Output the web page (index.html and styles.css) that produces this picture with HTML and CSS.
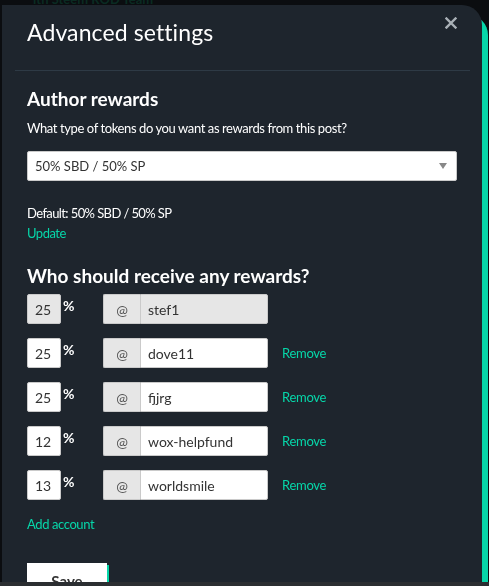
FILE: index.html
```html
<!DOCTYPE html>
<html lang="en">
<head>
<meta charset="utf-8">
<title>Advanced settings</title>
<link rel="stylesheet" href="styles.css">
</head>
<body>
<div class="page">
  <p class="page-line">ith Steem ROD Team</p>
</div>
<div class="overlay">
  <div class="modal">
    <div class="modal-header">
      <h3 class="modal-title">Advanced settings</h3>
      <button class="close" aria-label="Close">
        <svg width="12" height="12" viewBox="0 0 12 12"><path d="M1.5 1.5 L10.5 10.5 M10.5 1.5 L1.5 10.5" stroke="#a9b0b6" stroke-width="2.4" stroke-linecap="square"/></svg>
      </button>
    </div>
    <hr class="sep">
    <h4 class="section-title">Author rewards</h4>
    <p class="text q">What type of tokens do you want as rewards from this post?</p>
    <div class="select">
      <span>50% SBD / 50% SP</span>
      <span class="caret"></span>
    </div>
    <p class="text default">Default: 50% SBD / 50% SP</p>
    <a class="link update">Update</a>
    <h4 class="section-title who">Who should receive any rewards?</h4>
    <div class="rows">
      <div class="row">
        <div class="pct"><span class="input small disabled">25</span><span class="pct-sign">%</span></div>
        <div class="group"><span class="addon">@</span><span class="input name disabled">stef1</span></div>
      </div>
      <div class="row">
        <div class="pct"><span class="input small">25</span><span class="pct-sign">%</span></div>
        <div class="group"><span class="addon">@</span><span class="input name">dove11</span></div>
        <a class="link remove">Remove</a>
      </div>
      <div class="row">
        <div class="pct"><span class="input small">25</span><span class="pct-sign">%</span></div>
        <div class="group"><span class="addon">@</span><span class="input name">fjjrg</span></div>
        <a class="link remove">Remove</a>
      </div>
      <div class="row">
        <div class="pct"><span class="input small">12</span><span class="pct-sign">%</span></div>
        <div class="group"><span class="addon">@</span><span class="input name">wox-helpfund</span></div>
        <a class="link remove">Remove</a>
      </div>
      <div class="row">
        <div class="pct"><span class="input small">13</span><span class="pct-sign">%</span></div>
        <div class="group"><span class="addon">@</span><span class="input name">worldsmile</span></div>
        <a class="link remove">Remove</a>
      </div>
    </div>
    <a class="link add">Add account</a>
    <button class="save">Save</button>
  </div>
</div>
<div class="hbar"></div>
</body>
</html>
```
FILE: styles.css
```css
* { box-sizing: border-box; }
html, body { margin: 0; padding: 0; }
body {
  background: #0b0d10;
  font-family: Lato, "Noto Sans", sans-serif;
  color: #fff;
  height: 586px;
  overflow: hidden;
}
.page { padding-left: 33px; }
.page-line {
  margin: -8px 0 0;
  font-size: 13px;
  line-height: 14px;
  color: #0a2b22;
  font-weight: 700;
}
.overlay {
  position: fixed;
  inset: 0;
  padding: 5px 0 0 2px;
  overflow: hidden;
}
.modal {
  width: 480px;
  min-height: 700px;
  background: #1e252d;
  border-radius: 0 20px 0 0;
  box-shadow: 6px 10px 0 #06d6a9;
  padding: 12px 25px 0;
}
.modal-header {
  display: flex;
  justify-content: space-between;
  align-items: flex-start;
}
.modal-title {
  margin: 0;
  font-size: 23px;
  line-height: 30px;
  font-weight: 400;
  letter-spacing: 0.1px;
}
.close {
  background: none;
  border: 0;
  padding: 0;
  margin-top: 0;
  width: 12px;
  height: 12px;
  display: block;
  cursor: pointer;
}
.close svg { display: block; }
.sep {
  margin: 23px -13px 0 -12px;
  border: 0;
  height: 1px;
  background: #2e3a45;
}
.section-title {
  margin: 16px 0 0;
  font-size: 19px;
  line-height: 24px;
  font-weight: 700;
}
.text {
  margin: 0;
  font-size: 13px;
  line-height: 18px;
  letter-spacing: -0.4px;
}
.q { margin-top: 8px; }
.select {
  margin-top: 14px;
  height: 30px;
  background: #fff;
  border: 1px solid #cacaca;
  border-radius: 2px;
  display: flex;
  align-items: center;
  justify-content: space-between;
  padding: 0 8px 0 7px;
  color: #333;
  font-size: 13px;
}
.caret {
  width: 0;
  height: 0;
  border-left: 4px solid transparent;
  border-right: 4px solid transparent;
  border-top: 6px solid #888;
  margin-right: 1px;
}
.default { margin-top: 23px; letter-spacing: -0.6px; }
.link {
  color: #06d6a9;
  font-size: 13px;
  line-height: 18px;
  letter-spacing: -0.3px;
  display: block;
  cursor: pointer;
}
.update { margin-top: 2px; letter-spacing: -0.5px; }
.who { margin-top: 22px; }
.rows {
  margin-top: 6px;
  display: flex;
  flex-direction: column;
  gap: 14px;
}
.row {
  display: flex;
  align-items: flex-start;
  height: 30px;
}
.pct {
  width: 76px;
  display: flex;
  align-items: flex-start;
}
.input {
  height: 30px;
  background: #fff;
  border: 1px solid #cacaca;
  color: #333;
  font-size: 14px;
  display: flex;
  align-items: center;
}
.input.small {
  width: 34px;
  padding-left: 7px;
  border-radius: 2px;
}
.input.disabled { background: #e6e6e6; }
.pct-sign {
  font-size: 14px;
  line-height: 20px;
  margin: 2px 0 0 2px;
  font-weight: 700;
  color: #fff;
}
.group {
  display: flex;
  width: 165px;
}
.addon {
  width: 37px;
  height: 30px;
  background: #e6e6e6;
  border: 1px solid #cacaca;
  border-right: 0;
  border-radius: 2px 0 0 2px;
  color: #555;
  font-size: 14px;
  display: flex;
  align-items: center;
  justify-content: center;
}
.input.name {
  flex: 1;
  padding-left: 7px;
  border-radius: 0 2px 2px 0;
}
.remove {
  align-self: center;
  margin-left: 14px;
}
.add { margin-top: 15px; letter-spacing: -0.4px; }
.save {
  display: block;
  margin-top: 30px;
  width: 80px;
  height: 36px;
  background: #fff;
  border: 0;
  box-shadow: 2px 2px 0 #06d6a9;
  font-family: Lato, sans-serif;
  font-size: 15px;
  font-weight: 700;
  color: #333;
  padding: 0;
}
.hbar {
  position: fixed;
  left: 0;
  right: 0;
  bottom: 0;
  height: 4px;
  background: #2b2e31;
}
```
